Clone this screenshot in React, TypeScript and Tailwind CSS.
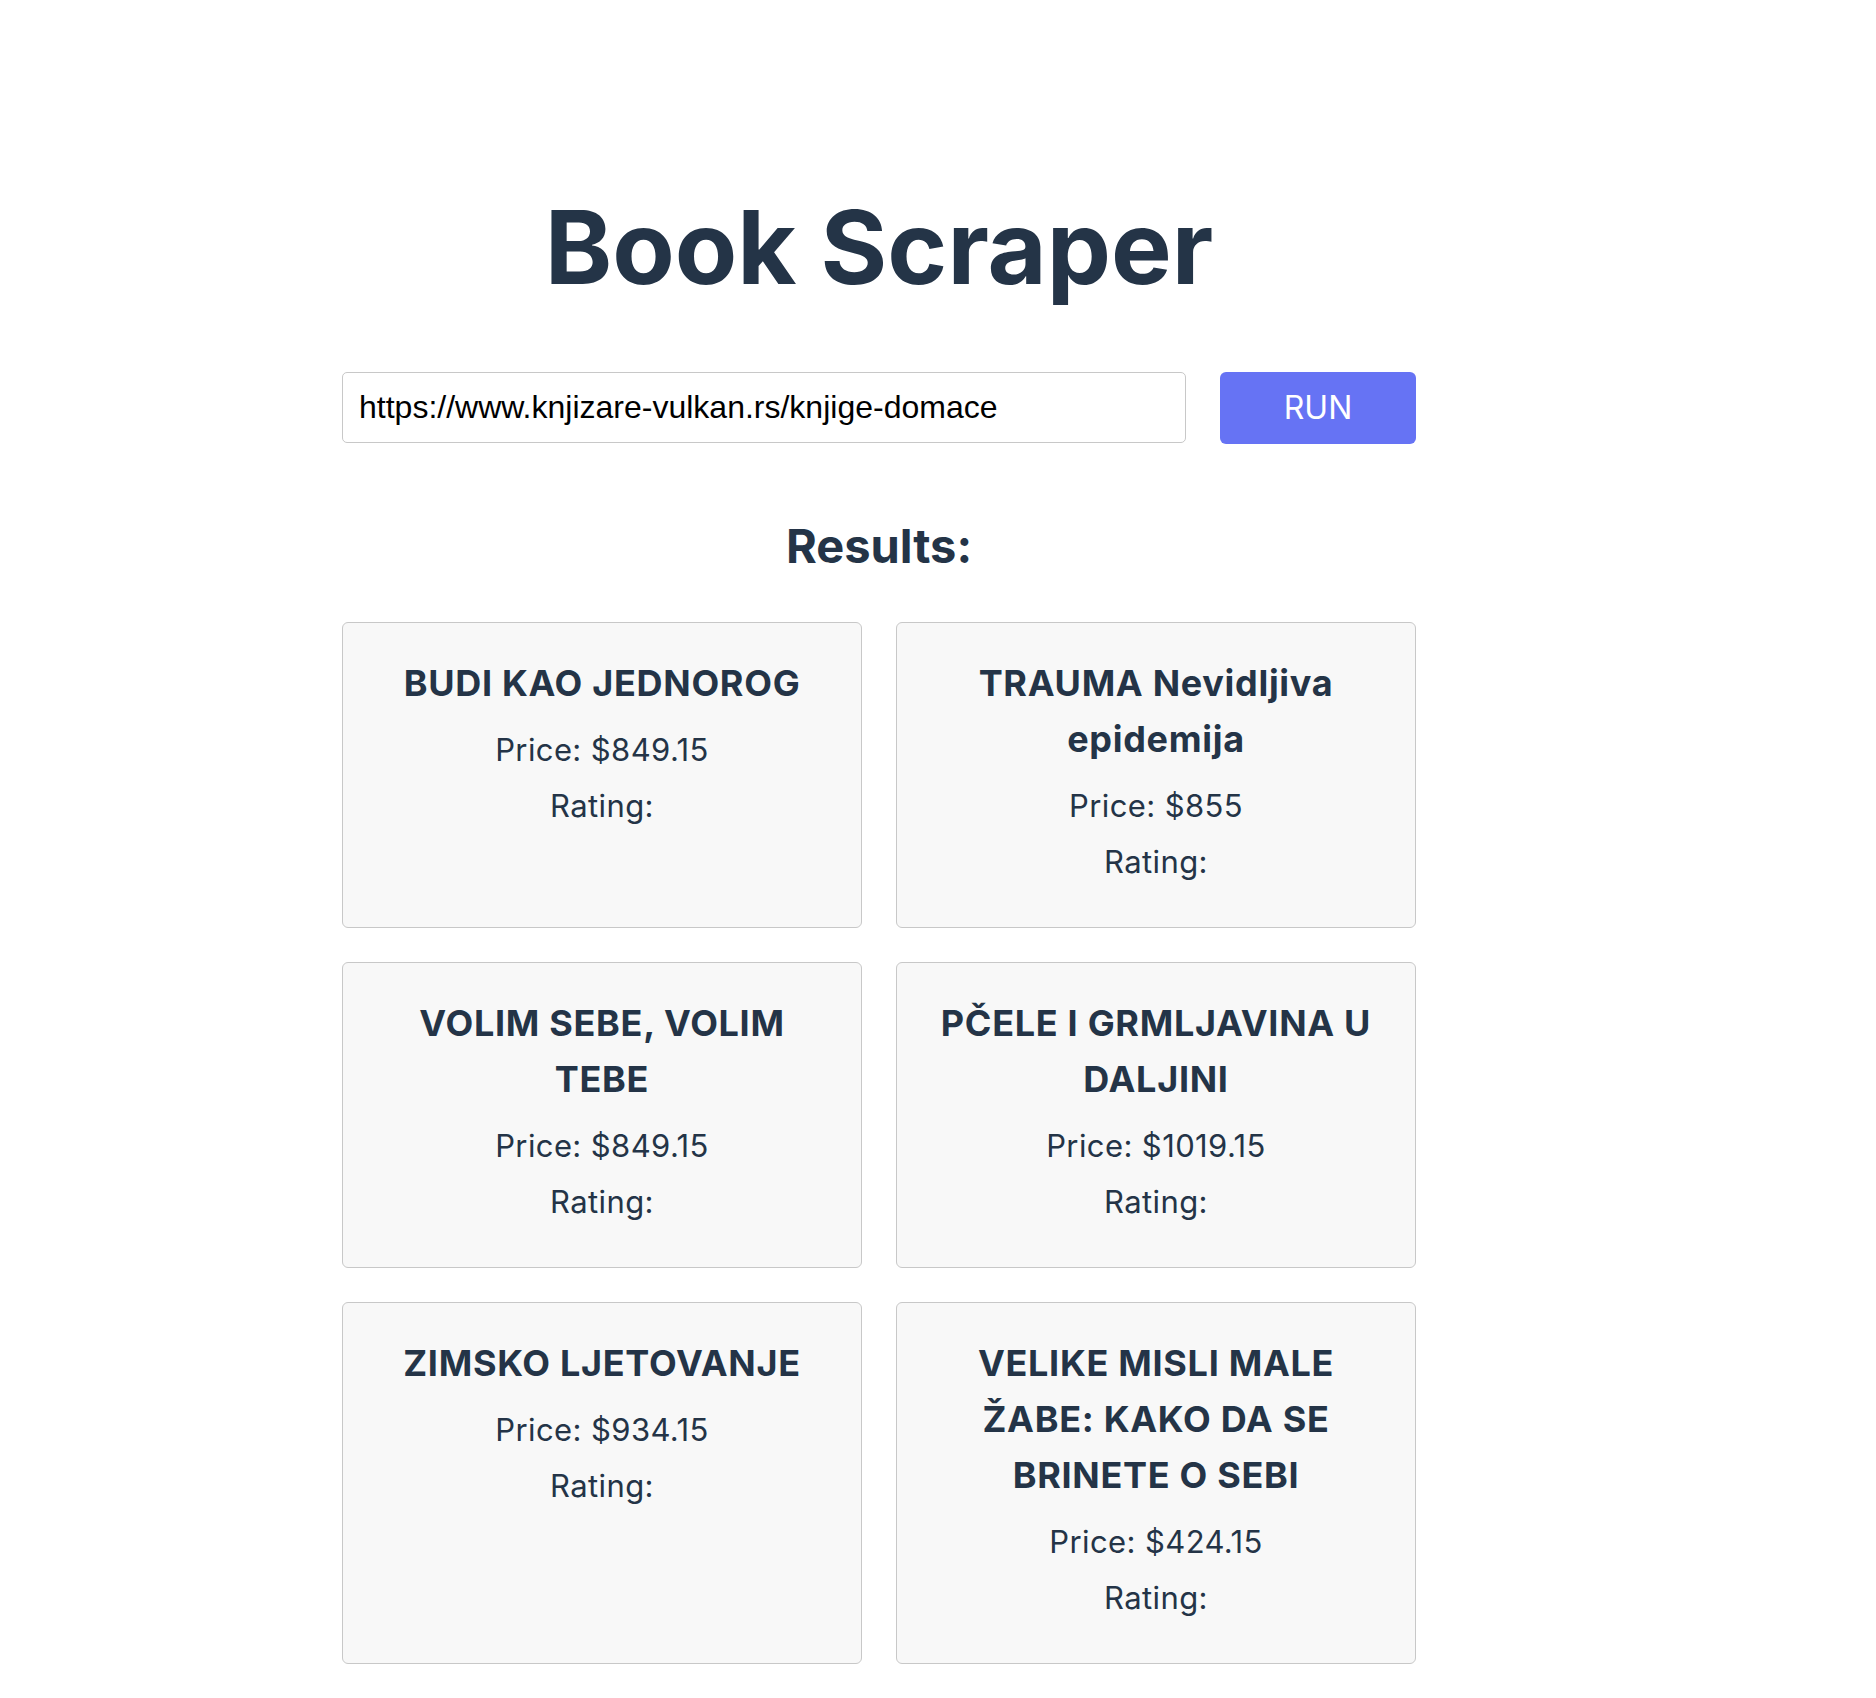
const books = [
  { title: 'BUDI KAO JEDNOROG', price: '$849.15' },
  { title: 'TRAUMA Nevidljiva epidemija', price: '$855' },
  { title: 'VOLIM SEBE, VOLIM TEBE', price: '$849.15' },
  { title: 'PČELE I GRMLJAVINA U DALJINI', price: '$1019.15' },
  { title: 'ZIMSKO LJETOVANJE', price: '$934.15' },
  { title: 'VELIKE MISLI MALE ŽABE: KAKO DA SE BRINETE O SEBI', price: '$424.15' },
];

function BookCard({ title, price }: { title: string; price: string }) {
  return (
    <div className="rounded-[6px] border border-[#c8c8c8] bg-[#f8f8f8] px-8 pt-8 pb-[37px] text-center">
      <h3 className="text-[36px] font-bold leading-[56px] tracking-[0.7px]">{title}</h3>
      <p className="mt-[11px] text-[31px] leading-[56px] tracking-[0.4px]">Price: {price}</p>
      <p className="text-[31px] leading-[56px] tracking-[0.4px]">Rating: </p>
    </div>
  );
}

export default function App() {
  return (
    <div className="min-h-[1698px] bg-white font-['Inter',sans-serif] text-[#243447]">
      <div className="ml-[342px] w-[1074px] pt-[196px]">
        <h1 className="text-center text-[102px] font-bold leading-none">Book Scraper</h1>

        <div className="mt-[74px] flex gap-[34px]">
          <input
            type="text"
            defaultValue="https://www.knjizare-vulkan.rs/knjige-domace"
            className="h-[71px] flex-1 rounded-[5px] border border-[#c8c8c8] pl-[16px] font-['Liberation_Sans',Arial,sans-serif] text-[32px] text-black outline-none"
          />
          <button className="h-[72px] w-[196px] rounded-[6px] bg-[#6673f4] text-[32px] text-white">
            RUN
          </button>
        </div>

        <h2 className="mt-[78px] text-center text-[47px] font-bold leading-none">Results:</h2>

        <div className="mt-[53px] grid grid-cols-2 gap-[34px]">
          {books.map((b) => (
            <BookCard key={b.title} title={b.title} price={b.price} />
          ))}
        </div>
      </div>
    </div>
  );
}
